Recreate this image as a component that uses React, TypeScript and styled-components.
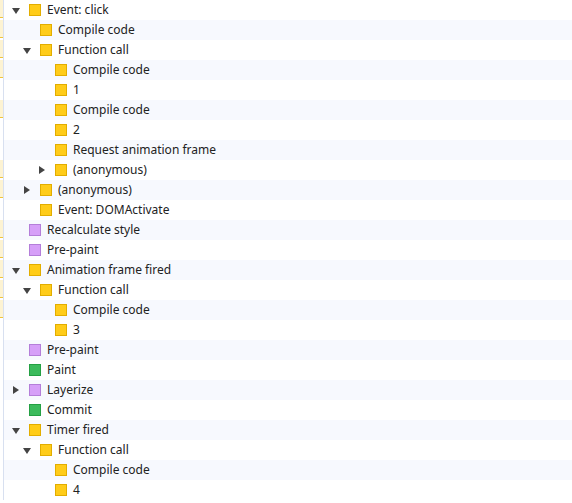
import styled, { createGlobalStyle, css } from 'styled-components'

type Kind = 'script' | 'render' | 'paint'
type Toggle = 'open' | 'closed' | null

interface Entry {
  level: 0 | 1 | 2
  kind: Kind
  toggle: Toggle
  label: string
  mark?: boolean
}

const entries: Entry[] = [
  { level: 0, kind: 'script', toggle: 'open', label: 'Event: click', mark: true },
  { level: 1, kind: 'script', toggle: null, label: 'Compile code', mark: true },
  { level: 1, kind: 'script', toggle: 'open', label: 'Function call', mark: true },
  { level: 2, kind: 'script', toggle: null, label: 'Compile code', mark: true },
  { level: 2, kind: 'script', toggle: null, label: '1' },
  { level: 2, kind: 'script', toggle: null, label: 'Compile code', mark: true },
  { level: 2, kind: 'script', toggle: null, label: '2' },
  { level: 2, kind: 'script', toggle: null, label: 'Request animation frame' },
  { level: 2, kind: 'script', toggle: 'closed', label: '(anonymous)', mark: true },
  { level: 1, kind: 'script', toggle: 'closed', label: '(anonymous)', mark: true },
  { level: 1, kind: 'script', toggle: null, label: 'Event: DOMActivate' },
  { level: 0, kind: 'render', toggle: null, label: 'Recalculate style', mark: true },
  { level: 0, kind: 'render', toggle: null, label: 'Pre-paint', mark: true },
  { level: 0, kind: 'script', toggle: 'open', label: 'Animation frame fired', mark: true },
  { level: 1, kind: 'script', toggle: 'open', label: 'Function call', mark: true },
  { level: 2, kind: 'script', toggle: null, label: 'Compile code', mark: true },
  { level: 2, kind: 'script', toggle: null, label: '3' },
  { level: 0, kind: 'render', toggle: null, label: 'Pre-paint' },
  { level: 0, kind: 'paint', toggle: null, label: 'Paint' },
  { level: 0, kind: 'render', toggle: 'closed', label: 'Layerize' },
  { level: 0, kind: 'paint', toggle: null, label: 'Commit' },
  { level: 0, kind: 'script', toggle: 'open', label: 'Timer fired' },
  { level: 1, kind: 'script', toggle: 'open', label: 'Function call' },
  { level: 2, kind: 'script', toggle: null, label: 'Compile code' },
  { level: 2, kind: 'script', toggle: null, label: '4' },
]

const swatches: Record<Kind, { fill: string; edge: string }> = {
  script: { fill: '#ffcc19', edge: '#e2ad00' },
  render: { fill: '#d69ff8', edge: '#b47ed9' },
  paint: { fill: '#3dbb5c', edge: '#25a043' },
}

const indents = [8, 19, 34]

const GlobalStyle = createGlobalStyle`
  html, body {
    margin: 0;
    padding: 0;
    background: #ffffff;
  }
  body {
    font-family: "Noto Sans", "Noto Sans CJK KR", sans-serif;
    font-size: 12px;
    color: #222222;
  }
`

const Tree = styled.div`
  width: 572px;
  height: 503px;
  overflow: hidden;
  display: flex;
  flex-direction: column;
`

const Row = styled.div<{ $striped: boolean }>`
  display: flex;
  align-items: stretch;
  height: 20px;
  flex-shrink: 0;
  background: ${(p) => (p.$striped ? '#f7f9fe' : '#ffffff')};
`

const Gutter = styled.div<{ $mark: boolean }>`
  width: 3px;
  flex-shrink: 0;
  border-right: 1px solid #d8e0f0;
  background: #ffffff;
  ${(p) =>
    p.$mark &&
    css`
      background: linear-gradient(
        to bottom,
        #fdf3d3 0,
        #fdf3d3 17px,
        #f0c43c 17px,
        #f0c43c 18px,
        #ffffff 18px
      );
    `}
`

const Cell = styled.div<{ $indent: number }>`
  display: flex;
  align-items: center;
  padding-left: ${(p) => p.$indent}px;
  min-width: 0;
`

const ToggleSlot = styled.div`
  width: 17px;
  flex-shrink: 0;
  display: flex;
  align-items: center;
`

const Arrow = styled.span<{ $dir: 'open' | 'closed' }>`
  display: block;
  width: 0;
  height: 0;
  ${(p) =>
    p.$dir === 'open'
      ? css`
          margin-top: 1px;
          border-left: 4px solid transparent;
          border-right: 4px solid transparent;
          border-top: 6px solid #444444;
        `
      : css`
          margin-left: 1px;
          border-top: 4px solid transparent;
          border-bottom: 4px solid transparent;
          border-left: 6px solid #444444;
        `}
`

const Swatch = styled.span<{ $kind: Kind }>`
  width: 10px;
  height: 10px;
  flex-shrink: 0;
  background: ${(p) => swatches[p.$kind].fill};
  border: 1px solid ${(p) => swatches[p.$kind].edge};
  margin-right: 6px;
`

const Label = styled.span`
  white-space: nowrap;
  line-height: 20px;
`

export default function App() {
  return (
    <>
      <GlobalStyle />
      <Tree>
        {entries.map((e, i) => (
          <Row key={i} $striped={i % 2 === 1}>
            <Gutter $mark={!!e.mark} />
            <Cell $indent={indents[e.level]}>
              <ToggleSlot>{e.toggle && <Arrow $dir={e.toggle} />}</ToggleSlot>
              <Swatch $kind={e.kind} />
              <Label>{e.label}</Label>
            </Cell>
          </Row>
        ))}
      </Tree>
    </>
  )
}
